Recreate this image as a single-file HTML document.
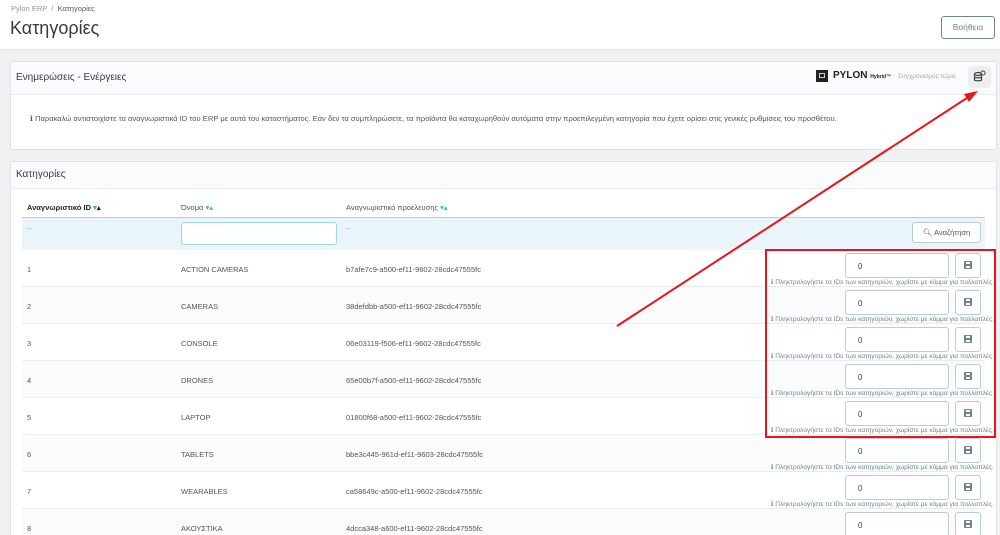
<!DOCTYPE html>
<html><head><meta charset="utf-8"><style>
*{box-sizing:border-box;margin:0;padding:0}
html,body{width:1000px;height:535px;overflow:hidden}
body{background:#eff1f2;font-family:"Liberation Sans","Noto Sans CJK JP",sans-serif;color:#363a41;position:relative}
.a{position:absolute;white-space:nowrap}
.hdr{left:0;top:0;width:1000px;height:50px;background:#fff;border-bottom:1px solid #e3e6e8}
.panel{background:#fff;border:1px solid #dfe3e6;border-radius:3px}
.ph{background:#fafbfc;border-bottom:1px solid #e8ecee}
.t{font-size:7.5px;color:#555}
.inp{background:#fff;border:1px solid #bbcdd2;border-radius:3px;height:25px;width:104px;font-size:8px;padding:8px 0 0 12px;color:#363a41}
.btn{background:#fff;border:1px solid #bbcdd2;border-radius:3px;width:26px;height:25px}
.help{font-size:6.6px;color:#6c868e;right:6px}
</style></head><body>
<div class="a hdr"></div>
<div class="a" style="left:11px;top:4px;font-size:7.5px;color:#8c9499">Pylon ERP &nbsp;/&nbsp; <span style="color:#555">Κατηγορίες</span></div>
<div class="a" style="left:10px;top:18px;font-size:18px;color:#363a41">Κατηγορίες</div>
<div class="a" style="left:941px;top:16px;width:54px;height:23px;border:1px solid #6c868e;border-radius:3px;font-size:8.5px;color:#6c868e;text-align:center;line-height:21px">Βοήθεια</div>

<div class="a panel" style="left:10px;top:61px;width:987px;height:89px"></div>
<div class="a ph" style="left:11px;top:62px;width:985px;height:33px"></div>
<div class="a" style="left:16px;top:72px;font-size:10px;color:#363a41">Ενημερώσεις - Ενέργειες</div>
<div class="a" style="left:816px;top:70px;width:12px;height:12px;background:#222"><div style="margin:3px;width:6px;height:5px;border:1px solid #ccc"></div></div>
<div class="a" style="left:833px;top:70px;font-size:10px;font-weight:bold;color:#222">PYLON <span style="font-size:5px">Hybrid™</span></div>
<div class="a" style="left:898px;top:73px;font-size:6.5px;color:#9aa">Συγχρονισμός τώρα</div>
<div class="a" style="left:968px;top:66px;width:23px;height:22px;background:#eee;border-radius:4px"><svg width="23" height="22" viewBox="0 0 23 22"><ellipse cx="10" cy="8" rx="3.5" ry="1.5" fill="none" stroke="#444" stroke-width="1.2"/><path d="M6.5 8v6c0 1 7 1 7 0V8M6.5 11c0 1 7 1 7 0" fill="none" stroke="#444" stroke-width="1.2"/><circle cx="15" cy="7" r="2" fill="none" stroke="#444" stroke-width="1"/></svg></div>
<div class="a t" style="left:30px;top:114px;font-size:7.6px">ℹ Παρακαλώ αντιστοιχίστε τα αναγνωριστικά ID του ERP με αυτά του καταστήματος. Εάν δεν τα συμπληρώσετε, τα προϊόντα θα καταχωρηθούν αυτόματα στην προεπιλεγμένη κατηγορία που έχετε ορίσει στις γενικές ρυθμίσεις του προσθέτου.</div>

<div class="a panel" style="left:10px;top:161px;width:987px;height:380px"></div>
<div class="a ph" style="left:11px;top:162px;width:985px;height:27px"></div>
<div class="a" style="left:16px;top:169px;font-size:10px">Κατηγορίες</div>
<div class="a" style="left:27px;top:203px;font-size:7.5px;font-weight:bold;color:#222">Αναγνωριστικό ID <span style="color:#25b9d7">▾</span>▴</div>
<div class="a t" style="left:181px;top:203px">Όνομα <span style="color:#25b9d7">▾▴</span></div>
<div class="a t" style="left:346px;top:203px">Αναγνωριστικό προέλευσης <span style="color:#25b9d7">▾▴</span></div>
<div class="a" style="left:22px;top:217px;width:963px;height:33px;background:#eaf4fb;border-top:1px solid #9fd6e6"></div>
<div class="a t" style="left:27px;top:224px;color:#999">--</div>
<div class="a" style="left:181px;top:222px;width:156px;height:23px;background:#fff;border:1px solid #9fd6e6;border-radius:3px"></div>
<div class="a t" style="left:346px;top:224px;color:#999">--</div>
<div class="a" style="left:912px;top:222px;width:69px;height:21px;background:#fff;border:1px solid #bbcdd2;border-radius:3px;font-size:7.5px;color:#555;text-align:center;line-height:19px">🔍︎ Αναζήτηση</div>

<div id="rows"></div>
<script>
var d=[["1","ACTION CAMERAS","b7afe7c9-a500-ef11-9602-28cdc47555fc"],["2","CAMERAS","38defdbb-a500-ef11-9602-28cdc47555fc"],["3","CONSOLE","06e03119-f506-ef11-9602-28cdc47555fc"],["4","DRONES","65e00b7f-a500-ef11-9602-28cdc47555fc"],["5","LAPTOP","01800f68-a500-ef11-9602-28cdc47555fc"],["6","TABLETS","bbe3c445-961d-ef11-9603-28cdc47555fc"],["7","WEARABLES","ca58649c-a500-ef11-9602-28cdc47555fc"],["8","ΑΚΟΥΣΤΙΚΑ","4dcca348-a600-ef11-9602-28cdc47555fc"]];
var h="";d.forEach(function(r,i){var y=250+i*37;
h+='<div class="a" style="left:22px;top:'+y+'px;width:963px;height:37px;border-bottom:1px solid #e8ecee;background:'+(i%2?'#fafbfc':'#fff')+'"></div>';
h+='<div class="a t" style="left:27px;top:'+(y+15)+'px">'+r[0]+'</div><div class="a t" style="left:181px;top:'+(y+15)+'px">'+r[1]+'</div><div class="a t" style="left:346px;top:'+(y+15)+'px">'+r[2]+'</div>';
h+='<div class="a inp" style="left:845px;top:'+(y+3)+'px">0</div><div class="a btn" style="left:955px;top:'+(y+3)+'px"><svg width="24" height="23" viewBox="0 0 24 23"><rect x="8" y="7" width="8" height="8" rx="1" fill="#6c868e"/><rect x="10" y="8" width="4" height="2" fill="#fff"/><rect x="10" y="12" width="4" height="2" fill="#fff"/></svg></div>';
h+='<div class="a help" style="top:'+(y+28)+'px">ℹ Πληκτρολογήστε τα IDs των κατηγοριών, χωρίστε με κόμμα για πολλαπλές.</div>';});
document.getElementById("rows").innerHTML=h;
</script>
<div class="a" style="left:765px;top:249px;width:231px;height:189px;border:2px solid #e8161b"></div>
<svg class="a" style="left:0;top:0" width="1000" height="535"><line x1="617" y1="326" x2="970" y2="96" stroke="#e8161b" stroke-width="2"/><polygon points="978,91 964,94 969,102" fill="#e8161b"/></svg>
</body></html>
